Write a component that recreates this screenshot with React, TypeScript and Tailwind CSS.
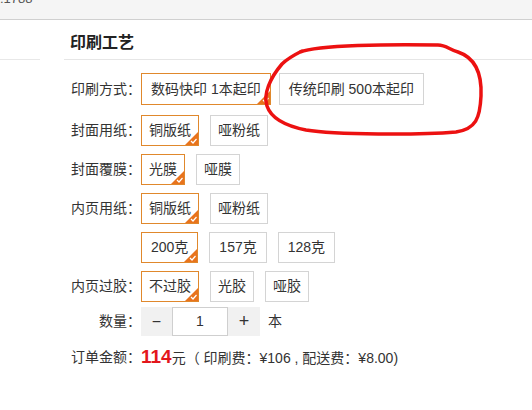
import React from 'react'

const font = "font-['Liberation_Sans','Noto_Sans_CJK_SC',sans-serif]"

function Corner() {
  return (
    <svg className="absolute right-0 bottom-0" width="13" height="13" viewBox="0 0 13 13">
      <path d="M13 0 L13 13 L0 13 Z" fill="#e8731c" />
      <path d="M6 9 L8 11 L11.5 7" fill="none" stroke="#fff" strokeWidth="1.2" />
    </svg>
  )
}

function Opt({ text, active = false, tall = false, wide = false }: { text: string; active?: boolean; tall?: boolean; wide?: boolean }) {
  return (
    <div
      className={`relative flex items-center border text-[14px] text-[#333] bg-white ${wide ? 'px-[9px]' : 'px-[7px]'} ${tall ? 'h-[32px]' : 'h-[31px]'} ${active ? 'border-[#e0882c]' : 'border-[#d4d4d4]'}`}
    >
      {text}
      {active && <Corner />}
    </div>
  )
}

function Label({ text }: { text: string }) {
  return <div className="w-[71px] shrink-0 text-right text-[14px] text-[#333]">{text}</div>
}

export default function App() {
  return (
    <div className={`relative w-[532px] h-[410px] overflow-hidden bg-white ${font}`}>
      {/* top bar */}
      <div className="h-[20px] overflow-hidden bg-[#f5f5f5] border-b border-[#d0d0d0]">
        <div className="-mt-[11px] text-[13px] text-[#555]">:1788</div>
      </div>

      {/* heading */}
      <div className="pl-[70px] mt-[11px] h-[24px] leading-[24px] text-[16px] font-bold text-[#222]">印刷工艺</div>
      <div className="flex mt-[4px]">
        <div className="w-[40px] h-px bg-[#e8e8e8]" />
        <div className="ml-[24px] flex-1 h-px bg-[#e6e6e6]" />
      </div>

      <div className="pl-[70px]">
        <div className="flex items-center mt-[13px]">
          <Label text="印刷方式：" />
          <div className="flex gap-[8px]">
            <Opt text="数码快印 1本起印" active tall wide />
            <Opt text="传统印刷 500本起印" tall wide />
          </div>
        </div>

        <div className="flex items-center mt-[10px]">
          <Label text="封面用纸：" />
          <div className="flex gap-[11px]">
            <Opt text="铜版纸" active />
            <Opt text="哑粉纸" />
          </div>
        </div>

        <div className="flex items-center mt-[8px]">
          <Label text="封面覆膜：" />
          <div className="flex gap-[11px]">
            <Opt text="光膜" active />
            <Opt text="哑膜" />
          </div>
        </div>

        <div className="flex items-center mt-[8px]">
          <Label text="内页用纸：" />
          <div className="flex gap-[11px]">
            <Opt text="铜版纸" active />
            <Opt text="哑粉纸" />
          </div>
        </div>

        <div className="flex items-center mt-[8px]">
          <Label text="" />
          <div className="flex gap-[11px]">
            <Opt text="200克" active wide />
            <Opt text="157克" wide />
            <Opt text="128克" wide />
          </div>
        </div>

        <div className="flex items-center mt-[8px]">
          <Label text="内页过胶：" />
          <div className="flex gap-[11px]">
            <Opt text="不过胶" active />
            <Opt text="光胶" />
            <Opt text="哑胶" />
          </div>
        </div>

        <div className="flex items-center mt-[5px]">
          <Label text="数量：" />
          <div className="flex h-[29px]">
            <div className="w-[31px] flex items-center justify-center bg-[#f1f1f1] text-[16px] text-[#333]">−</div>
            <div className="w-[56px] flex items-center justify-center border border-[#cfcfcf] text-[14px] text-[#333]">1</div>
            <div className="w-[32px] flex items-center justify-center bg-[#f1f1f1] text-[18px] text-[#333]">+</div>
          </div>
          <div className="ml-[8px] text-[14px] text-[#333]">本</div>
        </div>

        <div className="flex items-center mt-[9px] h-[24px]">
          <Label text="订单金额：" />
          <div className="flex items-baseline text-[14px] text-[#333]">
            <span className="text-[19px] font-bold text-[#e3161c]">114</span>
            <span>元（ 印刷费：¥106 , 配送费：¥8.00)</span>
          </div>
        </div>
      </div>

      {/* hand-drawn red loop */}
      <svg className="absolute inset-0 pointer-events-none" width="532" height="410" viewBox="0 0 532 410">
        <path
          d="M300 52 C318 45 390 44 438 45 C446 45 450 50 458 52 C476 58 482 74 481 96 C480 118 476 129 456 132 C420 135 335 135 306 130 C286 126 271 118 267 106 C263 94 270 78 282 64 C288 58 294 55 302 51"
          fill="none"
          stroke="#ec1111"
          strokeWidth="3.5"
          strokeLinecap="round"
          strokeLinejoin="round"
        />
      </svg>
    </div>
  )
}
